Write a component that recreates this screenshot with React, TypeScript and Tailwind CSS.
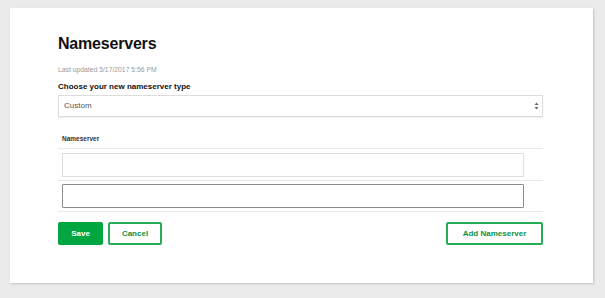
export default function App() {
  return (
    <div className="w-[605px] h-[298px] bg-[#ebebeb] pt-[8px] pl-[10px] font-['Liberation_Sans',Arial,sans-serif]">
      <div className="w-[583px] h-[275px] bg-white shadow-[1px_1px_2px_rgba(0,0,0,0.18)] pl-[48px] pr-[50px] pt-[26px]">
        <h1 className="text-[16px] leading-[20px] font-bold text-[#111] tracking-[-0.2px]">Nameservers</h1>
        <p className="mt-[11px] text-[6.8px] leading-[10px] text-[#9a9a9a]">Last updated 5/17/2017 5:56 PM</p>
        <p className="mt-[7px] text-[8px] leading-[10px] font-bold text-[#111]">Choose your new nameserver type</p>
        <div className="mt-[3px] h-[22px] border border-[#dcdcdc] shadow-[0_1px_1px_rgba(0,0,0,0.06)] flex items-center justify-between pl-[5px] pr-[3px]">
          <span className="text-[8px] text-[#555]">Custom</span>
          <svg width="5" height="8" viewBox="0 0 5 8">
            <path d="M2.5 0.5 L4.5 3 H0.5 Z" fill="#666" />
            <path d="M2.5 7.5 L4.5 5 H0.5 Z" fill="#666" />
          </svg>
        </div>
        <p className="mt-[17px] pl-[4px] text-[6.5px] leading-[10px] font-bold text-[#333]">Nameserver</p>
        <div className="mt-[4px] border-t border-[#e8e8e8]">
          <div className="pt-[4px] pb-[3px] pl-[4px] pr-[19px] border-b border-[#e8e8e8]">
            <div className="h-[24px] border border-[#dedede] bg-white" />
          </div>
          <div className="pt-[3px] pb-[3px] pl-[4px] pr-[19px] border-b border-[#e8e8e8]">
            <div className="h-[24px] border border-[#8c8c8c] rounded-[1px] bg-white" />
          </div>
        </div>
        <div className="mt-[10px] flex items-center">
          <button className="h-[23px] w-[45px] bg-[#00a63f] rounded-[2px] text-white text-[8px] font-bold">Save</button>
          <button className="ml-[5px] h-[23px] w-[54px] border-2 border-[#27ab55] rounded-[2px] text-[#0d8f3f] text-[8px] font-bold">Cancel</button>
          <button className="ml-auto h-[23px] w-[97px] border-2 border-[#27ab55] rounded-[2px] text-[#0d8f3f] text-[8px] font-bold">Add Nameserver</button>
        </div>
      </div>
    </div>
  );
}
